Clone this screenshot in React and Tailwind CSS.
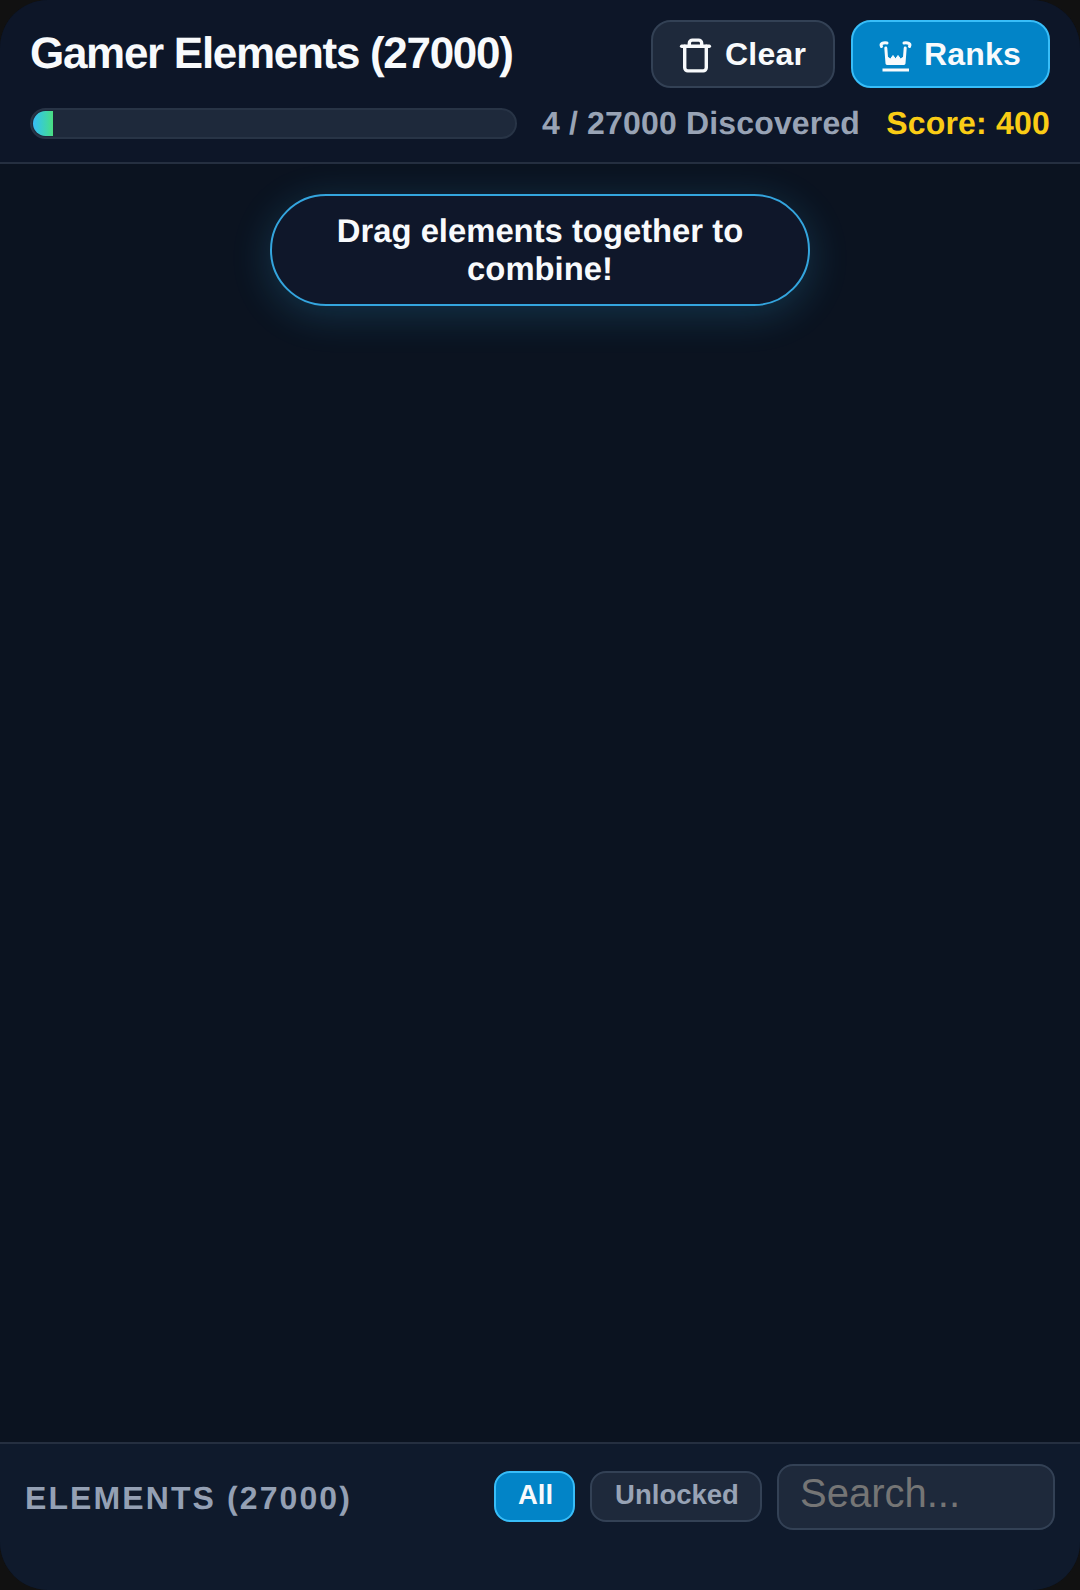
export default function App() {
  return (
    <div className="w-[1080px] h-[1590px] bg-[#111111] font-['Liberation_Sans',Arial,sans-serif] [text-rendering:geometricPrecision]">
      <div className="w-full h-full rounded-[48px] overflow-hidden flex flex-col bg-[#0b1320]">
        <header className="h-[164px] shrink-0 bg-[#0d1628] border-b-2 border-[#252f40] px-[30px] pt-[20px]">
          <div className="flex items-center justify-between h-[68px]">
            <h1 className="text-[44px] leading-none font-bold text-[#f8fafc] tracking-[-1.3px]">Gamer Elements (27000)</h1>
            <div className="flex gap-[16px]">
              <button className="w-[184px] h-[68px] flex items-center pl-[24px] gap-[11px] rounded-[20px] bg-[#1e293b] border-2 border-[#334155] text-[32px] tracking-[0.2px] font-bold text-[#f8fafc]">
                <svg width="37" height="37" viewBox="0 0 24 24" fill="none" stroke="currentColor" strokeWidth="2.2" strokeLinecap="round" strokeLinejoin="round" className="mt-[3px]">
                  <path d="M3 6h18" />
                  <path d="M19 6v14c0 1-1 2-2 2H7c-1 0-2-1-2-2V6" />
                  <path d="M8 6V4c0-1 1-2 2-2h4c1 0 2 1 2 2v2" />
                </svg>
                Clear
              </button>
              <button className="w-[199px] h-[68px] flex items-center pl-[23px] gap-[10px] rounded-[20px] bg-[#0284c7] border-2 border-[#38bdf8] text-[32px] tracking-[0.2px] font-bold text-[#f8fafc]">
                <svg width="38" height="36" viewBox="-1 0 38 36" fill="none" stroke="currentColor" strokeLinecap="round" strokeLinejoin="round" className="mt-[6px]">
                  <path d="M4.5 7.5 C3 4.5 6 3.5 10 4" strokeWidth="3" />
                  <path d="M32.5 7.5 C34 4.5 31 3.5 27 4" strokeWidth="3" />
                  <path d="M8.8 9 L10 24.5 H27 L28.2 9" strokeWidth="3" />
                  <path d="M10 24.5 L9.5 17.5 L13.5 20 L16 16.5 L18.5 20 L21 16.5 L23.5 20 L27.5 17.5 L27 24.5 Z" fill="currentColor" strokeWidth="1" />
                  <path d="M5.5 31 H32" strokeWidth="3" strokeLinecap="butt" />
                </svg>
                Ranks
              </button>
            </div>
          </div>
          <div className="flex items-center mt-[20px] h-[31px]">
            <div className="w-[487px] h-[31px] rounded-full bg-[#1e293b] border-2 border-[#283446] p-px overflow-hidden">
              <div className="w-[20px] h-full rounded-l-full bg-gradient-to-r from-[#38bdf8] to-[#4ade80]" />
            </div>
            <span className="ml-[25px] text-[32px] leading-none font-bold tracking-[0.16px] text-[#98a3b5] -mt-[1px]">4 / 27000 Discovered</span>
            <span className="ml-auto text-[32px] leading-none font-bold tracking-[0.2px] text-[#facc15] -mt-[1px]">Score: 400</span>
          </div>
        </header>

        <main className="flex-1 flex justify-center items-start pt-[30px]">
          <div className="w-[540px] h-[112px] rounded-[56px] border-[2.5px] border-[#34a5de] bg-[#0f172a] shadow-[0_8px_40px_rgba(56,189,248,0.2)] flex items-center justify-center px-[40px] text-center text-[32.8px] leading-[38px] font-bold text-[#f8fafc]">
            Drag elements together to combine!
          </div>
        </main>

        <footer className="h-[148px] shrink-0 bg-[#0f1a2c] border-t-2 border-[#252f40] pl-[25px] pr-[25px] pt-[20px]">
          <div className="flex items-center justify-between h-[66px]">
            <span className="text-[32px] leading-none font-bold text-[#94a0b4] tracking-[2.1px] uppercase mt-[2px]">Elements (27000)</span>
            <div className="flex items-center gap-[15px]">
              <button className="w-[81px] h-[51px] pb-[3px] pl-[2px] rounded-[16px] bg-[#0284c7] border-2 border-[#38bdf8] text-[27.5px] leading-none font-bold text-[#f8fafc] -mt-[1px]">All</button>
              <button className="w-[172px] h-[51px] pb-[3px] pl-[2px] rounded-[16px] bg-[#1e293b] border-2 border-[#334155] text-[27.5px] leading-none font-bold text-[#98a3b5] -mt-[1px]">Unlocked</button>
              <input
                placeholder="Search..."
                className="w-[278px] h-[66px] rounded-[16px] bg-[#1e293b] border-2 border-[#334155] pl-[21px] pr-[22px] pb-[8px] text-[40px] text-[#f8fafc] placeholder:text-[#757575] outline-none"
              />
            </div>
          </div>
        </footer>
      </div>
    </div>
  );
}
